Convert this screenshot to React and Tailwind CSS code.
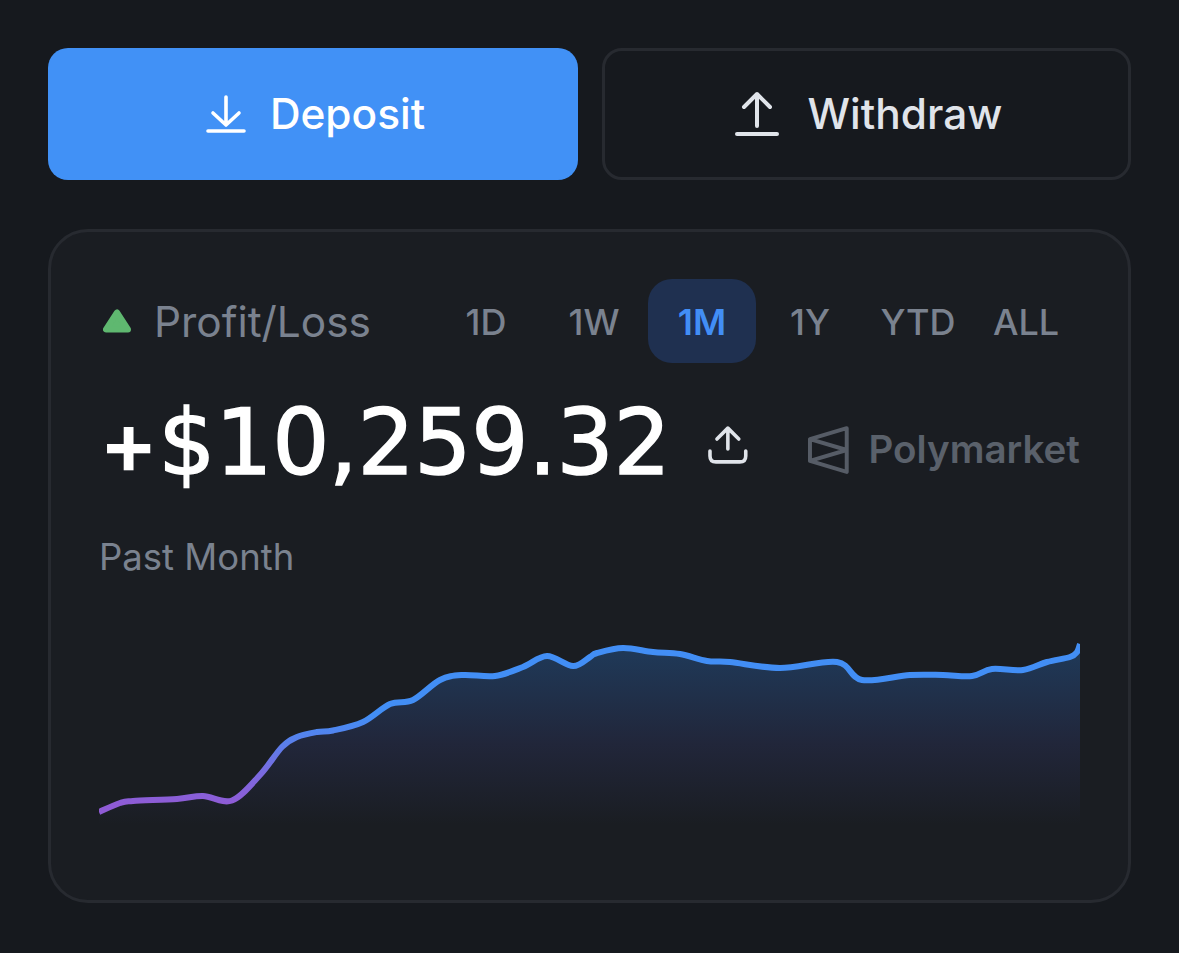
import React from 'react';

const ranges = ['1D', '1W', '1M', '1Y', 'YTD', 'ALL'];

// chart points, x from the left of the chart, y from its top
const pts = [
  [0, 177], [21, 168], [34, 166], [78, 164], [104, 161], [133, 165.5], [161, 140], [183, 112],
  [198, 102], [218, 97], [234, 95.5], [264, 87], [291, 69], [314, 65], [341, 45], [364, 40],
  [396, 41], [424, 32], [448, 21], [474, 31], [491, 22], [498, 18], [524, 13], [554, 17],
  [581, 19], [608, 26], [631, 27], [681, 33], [738, 27], [763, 45], [811, 40], [844, 40],
  [873, 41], [893, 34], [924, 35], [948, 27], [971, 22], [978, 17], [981, 9],
];

function smooth(points) {
  let d = `M${points[0][0]} ${points[0][1]}`;
  for (let i = 0; i < points.length - 1; i++) {
    const p0 = points[i - 1] || points[i];
    const p1 = points[i];
    const p2 = points[i + 1];
    const p3 = points[i + 2] || p2;
    const c1x = p1[0] + (p2[0] - p0[0]) / 6;
    const c1y = p1[1] + (p2[1] - p0[1]) / 6;
    const c2x = p2[0] - (p3[0] - p1[0]) / 6;
    const c2y = p2[1] - (p3[1] - p1[1]) / 6;
    d += ` C${c1x} ${c1y} ${c2x} ${c2y} ${p2[0]} ${p2[1]}`;
  }
  return d;
}

function Chart() {
  const line = smooth(pts);
  return (
    <svg width="981" height="200" viewBox="0 0 981 200" className="mt-[54px] block">
      <defs>
        <linearGradient id="stroke" gradientUnits="userSpaceOnUse" x1="0" y1="0" x2="0" y2="200">
          <stop offset="0.4" stopColor="#428ef5" />
          <stop offset="0.55" stopColor="#5c7eea" />
          <stop offset="0.7" stopColor="#7c69df" />
          <stop offset="0.85" stopColor="#8f5bd5" />
        </linearGradient>
        <linearGradient id="area" gradientUnits="userSpaceOnUse" x1="0" y1="10" x2="0" y2="190">
          <stop offset="0" stopColor="#1f3a5a" />
          <stop offset="0.55" stopColor="#21263a" />
          <stop offset="1" stopColor="#1a1d22" />
        </linearGradient>
      </defs>
      <path d={`${line} L981 200 L0 200 Z`} fill="url(#area)" />
      <path d={line} fill="none" stroke="url(#stroke)" strokeWidth="6" />
    </svg>
  );
}

export default function App() {
  return (
    <div className="min-h-screen bg-[#16191e] p-12 font-[Inter,sans-serif]">
      <div className="flex gap-6">
        <button className="flex h-[132px] w-[530px] items-center justify-center gap-[24px] rounded-[20px] bg-[#4191f6] pl-[5px] text-[42.4px] font-medium text-white">
          <svg width="40" height="40" viewBox="0 0 40 40" fill="none" stroke="currentColor" strokeWidth="3.6" strokeLinecap="round" strokeLinejoin="round">
            <path d="M20 3V31M7 19L20 31L33 19" />
            <path d="M2 37H38" />
          </svg>
          Deposit
        </button>
        <button className="flex h-[132px] w-[529px] items-center justify-center gap-[29px] rounded-[20px] border-[3px] border-[#272a30] pl-[4px] text-[42.4px] font-medium text-[#e0e4ea]">
          <svg width="44" height="46" viewBox="0 0 44 46" fill="none" stroke="currentColor" strokeWidth="4" strokeLinecap="round" strokeLinejoin="round">
            <path d="M22 3V35M9 16L22 3L35 16" />
            <path d="M2 43H42" />
          </svg>
          Withdraw
        </button>
      </div>

      <div className="mt-[49px] h-[674px] w-[1083px] rounded-[40px] border-[3px] border-[#272a30] bg-[#1a1d22] px-12 pt-[47px]">
        <div className="flex h-[84px] items-center justify-between">
          <div className="ml-[4px] flex items-center gap-[23px] text-[42.4px] text-[#7a828f]">
            <svg width="28" height="24" viewBox="0 0 28 24" fill="#5fb870" stroke="#5fb870" strokeWidth="6" strokeLinejoin="round">
              <path d="M14 3.5L3 20.5H25Z" />
            </svg>
            <span className="pt-[2px]">Profit/Loss</span>
          </div>
          <div className="flex">
            {ranges.map((r) => (
              <div
                key={r}
                className={
                  r === '1M'
                    ? 'flex h-[84px] w-[108px] items-center justify-center rounded-[24px] bg-[#1f3050] pt-[2px] text-[36px] font-semibold text-[#428ef5]'
                    : 'flex h-[84px] w-[108px] items-center justify-center pt-[2px] text-[36px] font-medium text-[#7a828f]'
                }
              >
                {r}
              </div>
            ))}
          </div>
        </div>

        <div className="mt-[42px] flex h-[90px] items-center">
          <div className="-mt-[14px] flex w-[613px] items-baseline font-['DejaVu_Sans',sans-serif] text-[90px] leading-none tracking-[-0.3px] text-white [-webkit-text-stroke:1.5px_white]">
            <span className="font-[Inter,sans-serif] text-[88px] font-semibold tracking-normal [-webkit-text-stroke:0]">+</span>
            <span>$10,259.32</span>
          </div>
          <svg width="40" height="40" viewBox="0 0 40 40" fill="none" stroke="#e0e4ea" strokeWidth="3.6" strokeLinecap="round" strokeLinejoin="round" className="-mt-[10px]">
            <path d="M20 3V24M9 14L20 3L31 14" />
            <path d="M2 26V31C2 35 4 37 8 37H32C36 37 38 35 38 31V26" />
          </svg>
          <svg width="45" height="50" viewBox="0 0 45 50" fill="none" stroke="#565c66" strokeWidth="4" strokeLinejoin="round" className="ml-[58px]">
            <path d="M41 3L4 14V36L41 47ZM4 14L41 25L4 36" />
          </svg>
          <span className="ml-[18px] text-[38.6px] font-semibold text-[#5a616b]">Polymarket</span>
        </div>

        <div className="mt-[38px] text-[36.5px] leading-[48px] text-[#7a828f]">Past Month</div>
        <Chart />
      </div>
    </div>
  );
}
